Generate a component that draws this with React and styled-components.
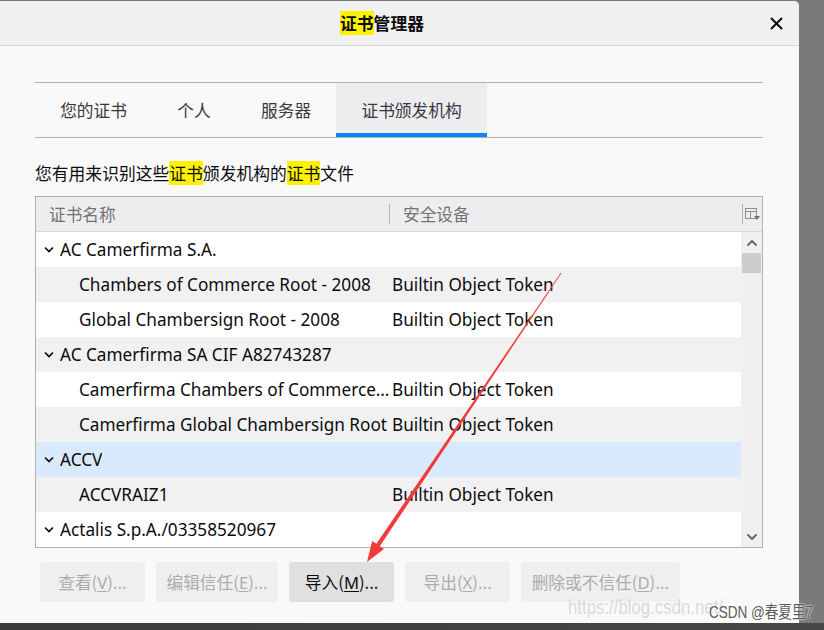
import React from 'react'
import styled, { createGlobalStyle } from 'styled-components'

const GlobalStyle = createGlobalStyle`
  html, body {
    margin: 0;
    padding: 0;
    background: #787878;
  }
  * {
    box-sizing: border-box;
  }
`

const LATIN = `"Noto Sans", "Noto Sans CJK SC", sans-serif`
const CJK = `"Noto Sans CJK SC", "Noto Sans", sans-serif`

const Screen = styled.div`
  position: relative;
  width: 824px;
  height: 630px;
  display: flex;
  flex-direction: column;
  overflow: hidden;
  font-family: ${LATIN};
  color: #0c0c0d;
`

const Desk = styled.div`
  height: 623px;
  display: flex;
  padding-top: 1px;
  background: #7a7a7a;
`

const Taskbar = styled.div`
  flex: 1;
  background: linear-gradient(90deg, #3b3b3b, #474747);
`

const Dialog = styled.div`
  width: 799px;
  display: flex;
  flex-direction: column;
  background: #f9f9f9;
  border-top-right-radius: 5px;
  overflow: hidden;
`

const TitleBar = styled.div`
  height: 45px;
  display: grid;
  grid-template-columns: 1fr 35px;
  align-items: center;
  background: #f0f0f0;
  border-bottom: 1px solid #d6d6d6;
`

const Title = styled.h1`
  margin: 0;
  text-align: center;
  font-family: ${CJK};
  font-size: 16.8px;
  font-weight: 700;
  line-height: 22px;
`

const Mark = styled.span`
  background: #fff100;
`

const CloseButton = styled.button`
  width: 24px;
  height: 24px;
  padding: 0;
  border: 0;
  background: transparent;
  display: flex;
  align-items: center;
  justify-content: center;
`

const Content = styled.div`
  padding: 0 36px 0 35px;
  display: flex;
  flex-direction: column;
`

const TabBar = styled.div`
  margin-top: 36px;
  display: flex;
  border-top: 1px solid #b1b1b3;
  border-bottom: 1px solid #b1b1b3;
`

const Tab = styled.div`
  height: 54px;
  padding: 0 25.2px;
  display: flex;
  align-items: center;
  font-family: ${CJK};
  font-size: 16.7px;
  color: #38383d;
  background: ${p => (p.$active ? '#ededf0' : 'transparent')};
  box-shadow: ${p => (p.$active ? 'inset 0 -4px 0 #0a84ff' : 'none')};
`

const Description = styled.p`
  margin: 24px 0 0;
  line-height: 22px;
  font-family: ${CJK};
  font-size: 16.8px;
`

const TreeBox = styled.div`
  margin-top: 12px;
  width: 728px;
  border: 1px solid #b1b1b3;
  background: #fff;
`

const HeaderRow = styled.div`
  height: 35px;
  display: grid;
  grid-template-columns: 354px 353px 1fr;
  align-items: center;
  background: #ededf0;
  border-bottom: 1px solid #d7d7db;
`

const HeaderCell = styled.div`
  padding-left: 13px;
  font-family: ${CJK};
  font-size: 16.7px;
  color: #737373;
  border-right: 1px solid #b1b1b3;
  height: 20px;
  line-height: 20px;
`

const PickerCell = styled.div`
  display: flex;
  align-items: center;
  justify-content: center;
`

const TreeBody = styled.div`
  display: grid;
  grid-template-columns: 705px 1fr;
`

const Rows = styled.div`
  display: flex;
  flex-direction: column;
`

const Row = styled.div`
  height: 35px;
  display: grid;
  grid-template-columns: 356px 1fr;
  align-items: center;
  font-size: 17.2px;
  background: ${p => (p.$selected ? '#d9eafd' : p.$alt ? '#f1f1f1' : '#ffffff')};
`

const NameCell = styled.div`
  display: flex;
  align-items: center;
  padding-left: ${p => (p.$child ? '43px' : '8px')};
  padding-right: 1px;
  white-space: nowrap;
  overflow: hidden;
`

const NameText = styled.span`
  overflow: hidden;
  text-overflow: ellipsis;
  white-space: nowrap;
`

const Twisty = styled.svg`
  flex: none;
  margin-right: 6px;
`

const DeviceCell = styled.div`
  white-space: nowrap;
`

const Scrollbar = styled.div`
  display: flex;
  flex-direction: column;
  background: #f0f0f0;
`

const ScrollButton = styled.div`
  height: 21px;
  display: flex;
  align-items: center;
  justify-content: center;
`

const Thumb = styled.div`
  height: 20px;
  margin: 0 1px;
  background: #cdcdcd;
`

const Track = styled.div`
  flex: 1;
`

const ButtonRow = styled.div`
  margin: 14px 0 0 5px;
  display: flex;
  gap: 11px;
`

const ActionButton = styled.button`
  height: 40px;
  min-width: 105px;
  padding: 0 10.5px;
  border: 0;
  border-radius: 3px;
  font-family: ${CJK};
  font-size: 16.7px;
  white-space: nowrap;
  background: ${p => (p.disabled ? '#efefef' : '#e0e0e1')};
  color: ${p => (p.disabled ? '#acacac' : '#0c0c0d')};
`

const Key = styled.span`
  font-family: ${LATIN};
  font-size: 16.6px;
  text-decoration: underline;
  text-underline-offset: 2px;
`

const Arrow = styled.svg`
  position: absolute;
  left: 0;
  top: 0;
  pointer-events: none;
`

const WatermarkUrl = styled.div`
  position: absolute;
  left: 568px;
  top: 596px;
  font-family: "Liberation Sans", sans-serif;
  font-size: 20px;
  color: rgba(190, 190, 190, 0.55);
  white-space: nowrap;
  transform: scaleX(0.84);
  transform-origin: left center;
`

const WatermarkTag = styled.div`
  position: absolute;
  left: 709px;
  top: 599px;
  font-family: "Liberation Sans", "Noto Sans CJK SC", sans-serif;
  font-size: 16.5px;
  color: #5a5a5a;
  white-space: nowrap;
  text-shadow: 0 0 2px #fff, 0 0 2px #fff;
  transform: scaleX(0.82);
  transform-origin: left center;
`

const tree = [
  { name: 'AC Camerfirma S.A.', group: true },
  { name: 'Chambers of Commerce Root - 2008', device: 'Builtin Object Token' },
  { name: 'Global Chambersign Root - 2008', device: 'Builtin Object Token' },
  { name: 'AC Camerfirma SA CIF A82743287', group: true },
  { name: 'Camerfirma Chambers of Commerce Root', device: 'Builtin Object Token' },
  { name: 'Camerfirma Global Chambersign Root', device: 'Builtin Object Token' },
  { name: 'ACCV', group: true, selected: true },
  { name: 'ACCVRAIZ1', device: 'Builtin Object Token' },
  { name: 'Actalis S.p.A./03358520967', group: true },
]

const Chevron = ({ up, color = '#606060' }) => (
  <svg width="12" height="8" viewBox="0 0 12 8">
    <path
      d={up ? 'M1.5 6.5 L6 2 L10.5 6.5' : 'M1.5 1.5 L6 6 L10.5 1.5'}
      fill="none"
      stroke={color}
      strokeWidth="1.8"
    />
  </svg>
)

const ColumnPicker = () => (
  <svg width="16" height="14" viewBox="0 0 16 14">
    <rect x="0.5" y="1.5" width="11" height="10" fill="none" stroke="#8f8f8f" />
    <line x1="0.5" y1="4.5" x2="11.5" y2="4.5" stroke="#8f8f8f" />
    <line x1="5.5" y1="4.5" x2="5.5" y2="11.5" stroke="#8f8f8f" />
    <path d="M9 9 L15 9 L12 13 Z" fill="#6d6d6d" />
  </svg>
)

const App = () => {
  return (
    <>
      <GlobalStyle />
      <Screen>
        <Desk>
          <Dialog>
            <TitleBar>
              <Title>
                <Mark>证书</Mark>管理器
              </Title>
              <CloseButton aria-label="关闭">
                <svg width="13" height="13" viewBox="0 0 13 13">
                  <path d="M1 1 L12 12 M12 1 L1 12" stroke="#0c0c0d" strokeWidth="2" />
                </svg>
              </CloseButton>
            </TitleBar>
            <Content>
              <TabBar>
                <Tab>您的证书</Tab>
                <Tab>个人</Tab>
                <Tab>服务器</Tab>
                <Tab $active>证书颁发机构</Tab>
              </TabBar>
              <Description>
                您有用来识别这些<Mark>证书</Mark>颁发机构的<Mark>证书</Mark>文件
              </Description>
              <TreeBox>
                <HeaderRow>
                  <HeaderCell>证书名称</HeaderCell>
                  <HeaderCell>安全设备</HeaderCell>
                  <PickerCell>
                    <ColumnPicker />
                  </PickerCell>
                </HeaderRow>
                <TreeBody>
                  <Rows>
                    {tree.map((item, i) => (
                      <Row key={item.name} $alt={i % 2 === 1} $selected={item.selected}>
                        <NameCell $child={!item.group}>
                          {item.group && (
                            <Twisty width="10" height="7" viewBox="0 0 10 7">
                              <path d="M1 1.5 L5 5.5 L9 1.5" fill="none" stroke="#0c0c0d" strokeWidth="1.7" />
                            </Twisty>
                          )}
                          <NameText>{item.name}</NameText>
                        </NameCell>
                        <DeviceCell>{item.device}</DeviceCell>
                      </Row>
                    ))}
                  </Rows>
                  <Scrollbar>
                    <ScrollButton>
                      <Chevron up />
                    </ScrollButton>
                    <Thumb />
                    <Track />
                    <ScrollButton>
                      <Chevron />
                    </ScrollButton>
                  </Scrollbar>
                </TreeBody>
              </TreeBox>
              <ButtonRow>
                <ActionButton disabled>查看(<Key>V</Key>)...</ActionButton>
                <ActionButton disabled>编辑信任(<Key>E</Key>)...</ActionButton>
                <ActionButton>导入(<Key>M</Key>)...</ActionButton>
                <ActionButton disabled>导出(<Key>X</Key>)...</ActionButton>
                <ActionButton disabled>删除或不信任(<Key>D</Key>)...</ActionButton>
              </ButtonRow>
            </Content>
          </Dialog>
        </Desk>
        <Taskbar />
        <Arrow width="824" height="630" viewBox="0 0 824 630">
          <polygon
            points="561.4,273.2 379.8,546.2 384,549 367,562 372.2,541 376.4,543.8 560.8,272.8"
            fill="#f23b3b"
          />
        </Arrow>
        <WatermarkUrl>https://blog.csdn.net/</WatermarkUrl>
        <WatermarkTag>CSDN @春夏里7</WatermarkTag>
      </Screen>
    </>
  )
}

export default App
